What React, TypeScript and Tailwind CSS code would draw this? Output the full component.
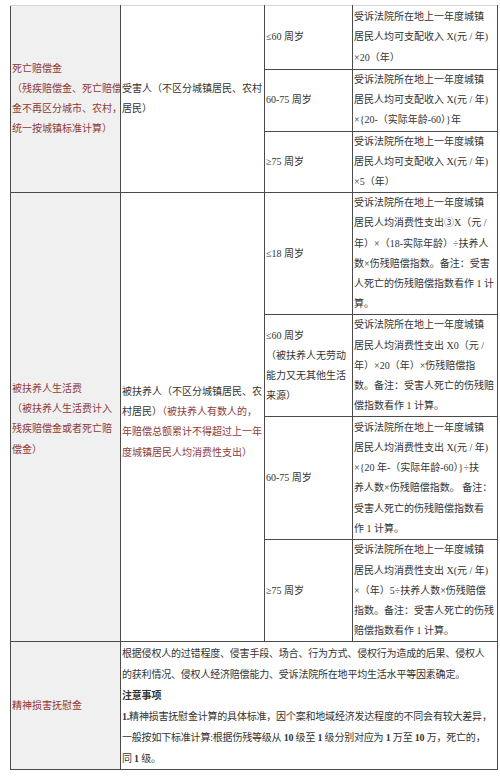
import React from "react";

const FONT = '"Liberation Serif", "Noto Sans CJK SC", serif';

// helper: lines kept as given in the source picture
const Lines = ({ lines }: { lines: React.ReactNode[] }) => (
  <>
    {lines.map((l, i) => (
      <div key={i} className="whitespace-nowrap">
        {l}
      </div>
    ))}
  </>
);

const Red = ({ children }: { children: React.ReactNode }) => (
  <span className="text-[#8e3b3b]">{children}</span>
);

const incomeRows = [
  {
    age: "≤60 周岁",
    h: "h-[64px]",
    text: ["受诉法院所在地上一年度城镇", "居民人均可支配收入 X(元 / 年)", "×20（年）"],
  },
  {
    age: "60-75 周岁",
    h: "h-[61px]",
    text: ["受诉法院所在地上一年度城镇", "居民人均可支配收入 X(元 / 年)", "×{20-（实际年龄-60）}年"],
  },
  {
    age: "≥75 周岁",
    h: "h-[60px]",
    text: ["受诉法院所在地上一年度城镇", "居民人均可支配收入 X(元 / 年)", "×5（年）"],
  },
];

const dependentRows = [
  {
    age: ["≤18 周岁"],
    h: "h-[122px]",
    text: [
      "受诉法院所在地上一年度城镇",
      "居民人均消费性支出③X（元 /",
      "年）×（18-实际年龄）÷扶养人",
      "数×伤残赔偿指数。备注：受害",
      "人死亡的伤残赔偿指数看作 1 计",
      "算。",
    ],
  },
  {
    age: ["≤60 周岁", "（被扶养人无劳动", "能力又无其他生活", "来源）"],
    h: "h-[101px]",
    text: [
      "受诉法院所在地上一年度城镇",
      "居民人均消费性支出 X0（元 /",
      "年）×20（年）×伤残赔偿指",
      "数。备注：受害人死亡的伤残赔",
      "偿指数看作 1 计算。",
    ],
  },
  {
    age: ["60-75 周岁"],
    h: "h-[123px]",
    text: [
      "受诉法院所在地上一年度城镇",
      "居民人均消费性支出 X(元 / 年)",
      "×{20 年-（实际年龄-60）}÷扶",
      "养人数×伤残赔偿指数。 备注：",
      "受害人死亡的伤残赔偿指数看",
      "作 1 计算。",
    ],
  },
  {
    age: ["≥75 周岁"],
    h: "h-[100px]",
    text: [
      "受诉法院所在地上一年度城镇",
      "居民人均消费性支出 X(元 / 年)",
      "×（年）5÷扶养人数×伤残赔偿",
      "指数。备注：受害人死亡的伤残",
      "赔偿指数看作 1 计算。",
    ],
  },
];

const cell = "border border-[#4a4a4a] p-0 pl-[1px] align-middle overflow-hidden";
const catCell = `${cell} bg-[#f0f0f0]`;

export default function App() {
  return (
    <div
      className="w-[500px] h-[779px] bg-white pt-[5px] overflow-hidden text-[10px] leading-[20.2px] text-[#333]"
      style={{ fontFamily: FONT }}
    >
      <table className="ml-[10px] w-[487px] table-fixed border-collapse">
        <colgroup>
          <col className="w-[110px]" />
          <col className="w-[144px]" />
          <col className="w-[88px]" />
          <col className="w-[145px]" />
        </colgroup>
        <tbody>
          {/* 死亡赔偿金 */}
          {incomeRows.map((r, i) => (
            <tr key={`inc-${i}`} className={r.h}>
              {i === 0 && (
                <>
                  <td rowSpan={3} className={`${catCell} border-t-[#d6d6d6]`}>
                    <div className="text-[#8e3b3b]">
                      <Lines
                        lines={[
                          "死亡赔偿金",
                          "（残疾赔偿金、死亡赔偿",
                          "金不再区分城市、农村，",
                          "统一按城镇标准计算）",
                        ]}
                      />
                    </div>
                  </td>
                  <td rowSpan={3} className={`${cell} border-t-[#d6d6d6]`}>
                    <Lines lines={["受害人（不区分城镇居民、农村", "居民）"]} />
                  </td>
                </>
              )}
              <td className={`${cell} ${i === 0 ? "border-t-[#d6d6d6]" : ""}`}>{r.age}</td>
              <td className={`${cell} ${i === 0 ? "border-t-[#d6d6d6]" : ""}`}>
                <Lines lines={r.text} />
              </td>
            </tr>
          ))}

          {/* 被扶养人生活费 */}
          {dependentRows.map((r, i) => (
            <tr key={`dep-${i}`} className={r.h}>
              {i === 0 && (
                <>
                  <td rowSpan={4} className={catCell}>
                    <div className="text-[#8e3b3b] pt-[4px]">
                      <Lines
                        lines={[
                          "被扶养人生活费",
                          "（被扶养人生活费计入",
                          "残疾赔偿金或者死亡赔",
                          "偿金）",
                        ]}
                      />
                    </div>
                  </td>
                  <td rowSpan={4} className={cell}>
                    <div className="pt-[10px]">
                      <Lines
                        lines={[
                          "被扶养人（不区分城镇居民、农",
                          <>
                            村居民）<Red>（被扶养人有数人的，</Red>
                          </>,
                          <Red>年赔偿总额累计不得超过上一年</Red>,
                          <Red>度城镇居民人均消费性支出）</Red>,
                        ]}
                      />
                    </div>
                  </td>
                </>
              )}
              <td className={cell}>
                <Lines lines={r.age} />
              </td>
              <td className={cell}>
                <Lines lines={r.text} />
              </td>
            </tr>
          ))}

          {/* 精神损害抚慰金 */}
          <tr className="h-[128px]">
            <td className={catCell}>
              <span className="text-[#8e3b3b]">精神损害抚慰金</span>
            </td>
            <td colSpan={3} className={`${cell} text-[10px] leading-[21px] tracking-[-0.2px]`}>
              <Lines
                lines={[
                  "根据侵权人的过错程度、侵害手段、场合、行为方式、侵权行为造成的后果、侵权人",
                  "的获利情况、侵权人经济赔偿能力、受诉法院所在地平均生活水平等因素确定。",
                  <span className="font-bold">注意事项</span>,
                  <>
                    <span className="font-bold">1.</span>
                    精神损害抚慰金计算的具体标准，因个案和地域经济发达程度的不同会有较大差异，
                  </>,
                  <>
                    一般按如下标准计算:根据伤残等级从 <b>10</b> 级至 <b>1</b> 级分别对应为 <b>1</b> 万至{" "}
                    <b>10</b> 万，死亡的，
                  </>,
                  <>
                    同 <b>1</b> 级。
                  </>,
                ]}
              />
            </td>
          </tr>
        </tbody>
      </table>
    </div>
  );
}
